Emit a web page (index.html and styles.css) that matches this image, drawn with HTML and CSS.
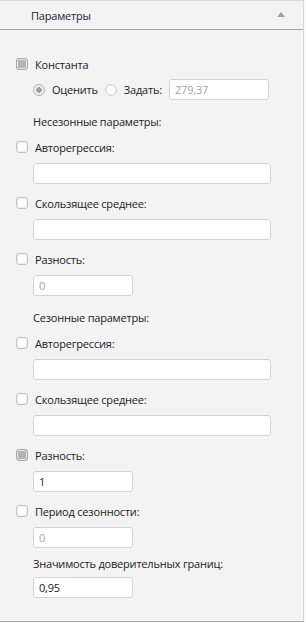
FILE: index.html
```html
<!DOCTYPE html>
<html lang="ru">
<head>
    <meta charset="UTF-8">
    <title>Параметры</title>
    <link rel="stylesheet" href="styles.css">
</head>
<body>
    <div class="panel">
        <div class="panel-header">
            <span class="panel-title">Параметры</span>
            <span class="collapse-arrow"></span>
        </div>

        <div class="panel-body">
            <div class="row row-const">
                <span class="check check-mixed"></span>
                <span class="label">Константа</span>
            </div>

            <div class="row row-radio indent">
                <span class="radio radio-on"></span>
                <span class="label">Оценить</span>
                <span class="radio"></span>
                <span class="label">Задать:</span>
                <div class="field field-const disabled">279,37</div>
            </div>

            <div class="row caption indent">Несезонные параметры:</div>

            <div class="row row-check">
                <span class="check"></span>
                <span class="label">Авторегрессия:</span>
            </div>
            <div class="field field-wide indent"></div>

            <div class="row row-check">
                <span class="check"></span>
                <span class="label">Скользящее среднее:</span>
            </div>
            <div class="field field-wide indent"></div>

            <div class="row row-check">
                <span class="check"></span>
                <span class="label">Разность:</span>
            </div>
            <div class="field field-short indent disabled">0</div>

            <div class="row caption indent">Сезонные параметры:</div>

            <div class="row row-check">
                <span class="check"></span>
                <span class="label">Авторегрессия:</span>
            </div>
            <div class="field field-wide indent"></div>

            <div class="row row-check">
                <span class="check"></span>
                <span class="label">Скользящее среднее:</span>
            </div>
            <div class="field field-wide indent"></div>

            <div class="row row-check">
                <span class="check check-mixed"></span>
                <span class="label">Разность:</span>
            </div>
            <div class="field field-short indent">1</div>

            <div class="row row-check">
                <span class="check"></span>
                <span class="label">Период сезонности:</span>
            </div>
            <div class="field field-short indent disabled">0</div>

            <div class="row caption caption-last indent">Значимость доверительных границ:</div>
            <div class="field field-short indent field-last">0,95</div>
        </div>
    </div>
</body>
</html>
```

FILE: styles.css
```css
* {
    margin: 0;
    padding: 0;
    box-sizing: border-box;
}

body {
    background: #fafafa;
    font-family: 'Open Sans', 'Noto Sans', sans-serif;
    font-size: 11px;
    letter-spacing: -0.2px;
    color: #222222;
}

.panel {
    width: 304px;
    height: 622px;
    background: #f3f3f3;
    border-top: 1px solid #dcdcdc;
    border-right: 1px solid #d6d6d6;
    border-bottom: 1px solid #a8a8a8;
}

.panel-header {
    height: 29px;
    display: flex;
    align-items: center;
    justify-content: space-between;
    padding: 0 18px 0 31px;
    border-bottom: 1px solid #a6a6a6;
}

.panel-title {
    color: #1c1c3a;
}

.collapse-arrow {
    width: 0;
    height: 0;
    border-left: 4px solid transparent;
    border-right: 4px solid transparent;
    border-bottom: 5px solid #a0a0a0;
    margin-top: -1px;
}

.panel-body {
    padding: 24px 0 0 16px;
}

.indent {
    margin-left: 17px;
}

.row {
    height: 20px;
    display: flex;
    align-items: center;
}

.row-radio {
    height: 21px;
    margin-top: 5px;
}

.caption {
    margin-top: 11px;
}

.caption-last {
    margin-top: 5px;
}

.row-check {
    margin-top: 9px;
}

.caption + .row-check {
    margin-top: 6px;
}

.label {
    margin-left: 7px;
    white-space: nowrap;
}

.row-radio .label {
    margin-left: 7px;
    margin-right: 7px;
}

.check {
    width: 12px;
    height: 12px;
    flex: none;
    border: 1px solid #c4c4c4;
    border-radius: 3px;
    background: #ffffff;
    box-shadow: inset 0 0 0 1px #f0f0f0;
}

.check-mixed {
    border-color: #a9a9a9;
    background: #b4b4b4;
    box-shadow: inset 0 0 0 1px #e6e6e6;
}

.radio {
    width: 12px;
    height: 12px;
    flex: none;
    border: 1px solid #cfcfcf;
    border-radius: 50%;
    background: #ffffff;
    box-shadow: inset 0 0 0 1px #f0f0f0;
}

.radio-on {
    border-color: #b0b0b0;
    background: radial-gradient(circle, #9e9e9e 0 2.5px, #e2e2e2 3px, #f4f4f4 4px);
}

.field {
    height: 21px;
    background: #ffffff;
    border: 1px solid #d3d3d3;
    border-radius: 3px;
    padding: 0 5px;
    line-height: 19px;
    color: #222222;
}

.field.disabled {
    color: #a3a3a3;
}

.field-const {
    width: 100px;
    margin-left: 0;
}

.field-wide {
    width: 238px;
    margin-top: 6px;
}

.field-short {
    width: 100px;
    margin-top: 6px;
}

.field-last {
    margin-top: 4px;
}
```
